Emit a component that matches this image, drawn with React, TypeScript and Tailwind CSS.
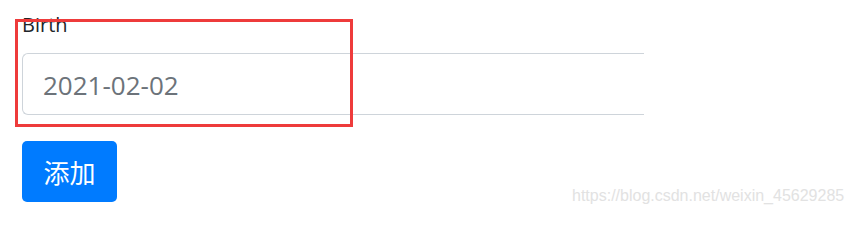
import React from 'react';

export default function App() {
  return (
    <div className="relative w-[853px] h-[214px] overflow-hidden bg-white font-['Open_Sans',sans-serif]">
      {/* Form */}
      <div className="pl-[22px] pt-[10px]">
        <label className="block text-[20px] leading-[30px] text-[#212529]">Birth</label>
        <div className="mt-[13px] w-[622px]">
          <input
            type="text"
            value="2021-02-02"
            readOnly
            className="block w-full h-[62px] pl-[20px] pt-[2px] border-y border-l border-[#ced4da] rounded-l-[6px] text-[26px] text-[#6c737a] outline-none bg-white"
          />
        </div>
        <button className="mt-[26px] w-[95px] h-[61px] rounded-[5px] bg-[#007bff] text-white text-[26px] font-['Noto_Sans_CJK_SC',sans-serif] leading-none">
          添加
        </button>
      </div>

      {/* Red annotation box */}
      <div className="absolute left-[15px] top-[19px] w-[338px] h-[108px] border-[3px] border-[#ee3b3b] pointer-events-none" />

      {/* Watermark */}
      <div className="absolute left-[572px] top-[184px] text-[16px] text-[#e2e2e2] font-['Liberation_Sans',Arial,sans-serif]">
        https://blog.csdn.net/weixin_45629285
      </div>
    </div>
  );
}
